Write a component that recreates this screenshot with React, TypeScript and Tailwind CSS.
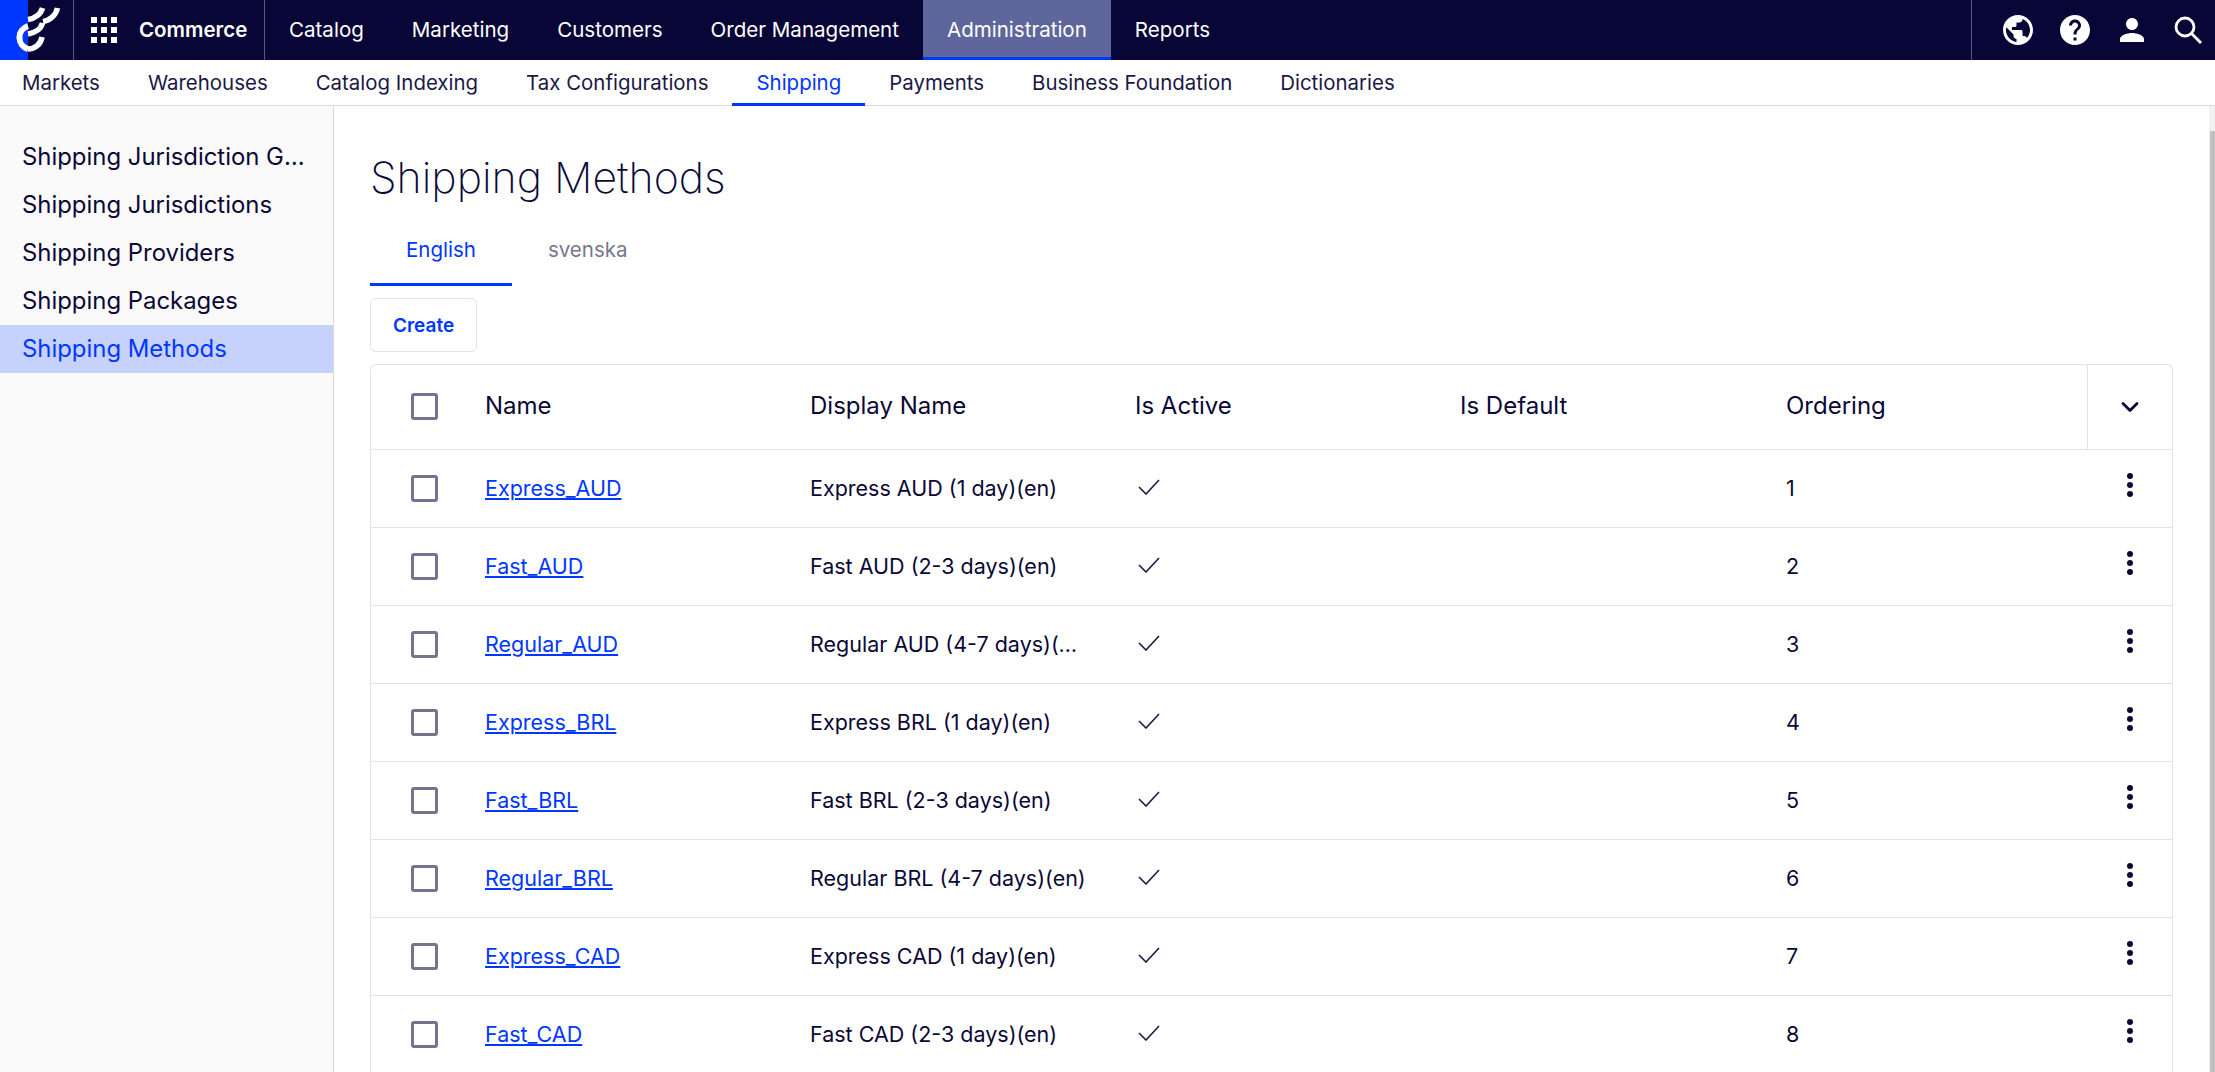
import { ChevronDown } from 'lucide-react';
import { MdHelp, MdPerson, MdPublic } from 'react-icons/md';

const topNav = ['Catalog', 'Marketing', 'Customers', 'Order Management', 'Administration', 'Reports'];
const subNav = ['Markets', 'Warehouses', 'Catalog Indexing', 'Tax Configurations', 'Shipping', 'Payments', 'Business Foundation', 'Dictionaries'];
const sideNav = ['Shipping Jurisdiction Groups', 'Shipping Jurisdictions', 'Shipping Providers', 'Shipping Packages', 'Shipping Methods'];

const methods = [
  { name: 'Express_AUD', display: 'Express AUD (1 day)(en)', order: 1 },
  { name: 'Fast_AUD', display: 'Fast AUD (2-3 days)(en)', order: 2 },
  { name: 'Regular_AUD', display: 'Regular AUD (4-7 days)(en)', order: 3 },
  { name: 'Express_BRL', display: 'Express BRL (1 day)(en)', order: 4 },
  { name: 'Fast_BRL', display: 'Fast BRL (2-3 days)(en)', order: 5 },
  { name: 'Regular_BRL', display: 'Regular BRL (4-7 days)(en)', order: 6 },
  { name: 'Express_CAD', display: 'Express CAD (1 day)(en)', order: 7 },
  { name: 'Fast_CAD', display: 'Fast CAD (2-3 days)(en)', order: 8 },
];

const rowGrid = 'grid grid-cols-[114px_325px_325px_325px_326px_301px_1fr] items-center';

function Logo() {
  return (
    <div className="relative h-[60px] w-[74px] shrink-0 border-r border-[#5a5878] bg-[linear-gradient(90deg,#0037ff_28px,transparent_28px)]">
      <svg width="74" height="60" viewBox="0 0 74 60" fill="none" stroke="#fff" strokeWidth="5.5">
        <path d="M28 26 A12 12 0 0 0 28 49" strokeWidth="6" />
        <path d="M28 49 C35 49 41 44 42 37" />
        <path d="M28 34 C35 33 41 29 42.500 23" />
        <path d="M28 19.500 C35 18.500 41 14 42.500 8" />
        <path d="M43 21.500 C50 20.500 56 15 57.500 8" />
      </svg>
    </div>
  );
}

function GridIcon() {
  return (
    <div className="grid grid-cols-3 gap-[4px]">
      {Array.from({ length: 9 }, (_, i) => (
        <span key={i} className="block h-[6px] w-[6px] bg-white" />
      ))}
    </div>
  );
}

function CheckBox({ header }: { header?: boolean }) {
  return (
    <span
      className={`ml-[40px] block h-[27px] w-[27px] rounded-[3px] border-[3px] border-[#74748f] bg-white ${
        header ? 'mb-[2px]' : ''
      }`}
    />
  );
}

export default function App() {
  return (
    <div className="flex h-[1072px] w-full flex-col overflow-hidden bg-white font-['Inter',sans-serif] text-[#0b0836]">
      {/* top bar */}
      <header className="flex h-[60px] shrink-0 items-stretch bg-[#080537] text-white">
        <Logo />
        <div className="flex w-[191px] shrink-0 items-center border-r border-[#5a5878] pl-[17px]">
          <GridIcon />
          <span className="ml-[22px] text-[20.500px] font-semibold">Commerce</span>
        </div>
        <nav className="flex flex-1 items-stretch">
          {topNav.map((item) => (
            <a
              key={item}
              className={`flex items-center px-[24px] text-[20.550px] ${
                item === 'Administration' ? 'border-b-[3px] border-[#0037ff] bg-[#5e669b] pt-[3px]' : ''
              }`}
            >
              {item}
            </a>
          ))}
        </nav>
        <div className="flex w-[244px] shrink-0 items-center gap-[21px] border-l border-[#5a5878] pl-[28px]">
          <MdPublic className="h-[36px] w-[36px]" />
          <MdHelp className="h-[36px] w-[36px]" />
          <MdPerson className="h-[36px] w-[36px]" />
          <svg className="ml-[2px]" width="30" height="30" viewBox="0 0 30 30" fill="none" stroke="#fff" strokeWidth="2.800">
            <circle cx="12" cy="12" r="9" />
            <path d="M18.500 18.500 L28 28" />
          </svg>
        </div>
      </header>

      {/* second level nav */}
      <nav className="flex h-[46px] shrink-0 items-stretch border-b border-[#dadada] text-[#1b1845]">
        {subNav.map((item) => (
          <a
            key={item}
            className={`-mb-px flex items-center px-[24px] text-[20.450px] first:-ml-[2px] ${
              item === 'Shipping' ? 'border-b-[3px] border-[#0037ff] pt-[3px] text-[#0037ff]' : ''
            }`}
          >
            {item}
          </a>
        ))}
      </nav>

      <div className="flex min-h-0 flex-1">
        {/* side nav */}
        <aside className="w-[334px] shrink-0 border-r border-[#dadada] bg-[#fafafa] pt-[27px]">
          {sideNav.map((item) => (
            <a
              key={item}
              className={`block h-[48px] truncate pl-[22px] pr-[22px] text-[23.900px] leading-[48px] ${
                item === 'Shipping Methods' ? 'bg-[#c6d2fb] text-[#0037ff]' : ''
              }`}
            >
              {item}
            </a>
          ))}
        </aside>

        {/* content */}
        <main className="min-w-0 flex-1 overflow-hidden pl-[36px] pr-[36px] pt-[48px]">
          <h1 className="h-[48px] text-[42.800px] font-extralight leading-[48px]">Shipping Methods</h1>

          <div className="mt-[12px] flex h-[72px] items-stretch text-[20.500px]">
            <a className="flex items-center border-b-[3px] border-[#0037ff] px-[36px] pt-[4px] text-[#0037ff]">English</a>
            <a className="flex items-center px-[36px] pt-[1px] text-[#77778c]">svenska</a>
          </div>

          <button className="mt-[12px] h-[54px] rounded-[6px] border border-[#e2e2e8] px-[22px] pt-[2px] text-[19px] font-semibold text-[#0037ff]">
            Create
          </button>

          <div className="mt-[12px] rounded-t-[6px] border border-b-0 border-[#e2e2e8]">
            <div className={`${rowGrid} h-[85px] border-b border-[#e2e2e8] text-[24px]`}>
              <CheckBox header />
              <span className="pb-[2px]">Name</span>
              <span className="pb-[2px]">Display Name</span>
              <span className="pb-[2px]">Is Active</span>
              <span className="pb-[2px]">Is Default</span>
              <span className="pb-[2px]">Ordering</span>
              <span className="flex h-full items-center justify-center border-l border-[#e2e2e8]">
                <ChevronDown className="h-[28px] w-[28px]" strokeWidth={2.400} />
              </span>
            </div>
            {methods.map((m) => (
              <div key={m.name} className={`${rowGrid} h-[78px] border-b border-[#e2e2e8] text-[21.500px]`}>
                <CheckBox />
                <a className="text-[#0037ff] underline">{m.name}</a>
                <span className="truncate pr-[48px]">{m.display}</span>
                <svg className="mb-[3px] ml-[3px]" width="22" height="16" viewBox="0 0 22 16" fill="none" stroke="#1c1a45" strokeWidth="1.600">
                  <path d="M1 8 L8 15 L21 1" />
                </svg>
                <span />
                <span>{m.order}</span>
                <span className="flex flex-col items-center gap-[3px] pb-[7px]">
                  <i className="block h-[6px] w-[6px] rounded-full bg-[#0b0836]" />
                  <i className="block h-[6px] w-[6px] rounded-full bg-[#0b0836]" />
                  <i className="block h-[6px] w-[6px] rounded-full bg-[#0b0836]" />
                </span>
              </div>
            ))}
          </div>
        </main>

        {/* scrollbar */}
        <div className="w-[6px] shrink-0 bg-[#f1f1f1] pt-[25px]">
          <div className="ml-[1px] h-full bg-[#c1c1c1]" />
        </div>
      </div>
    </div>
  );
}
